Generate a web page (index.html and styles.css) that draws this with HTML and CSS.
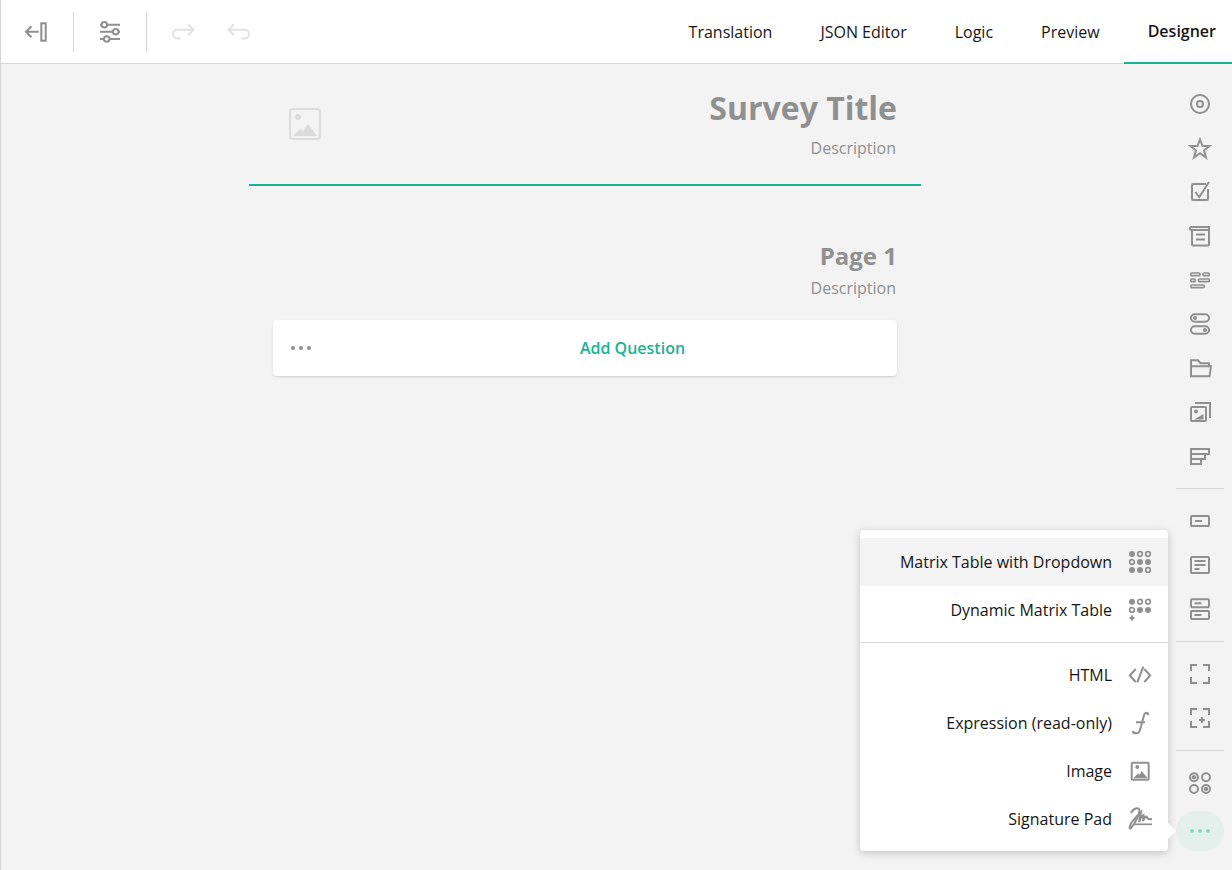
FILE: index.html
```html
<!DOCTYPE html>
<html lang="en">
<head>
<meta charset="utf-8">
<title>Survey Creator</title>
<link rel="stylesheet" href="styles.css">
</head>
<body>
<div class="app">
  <header class="topbar">
    <div class="actions">
      <button class="tool tool-first"><svg class="ico" viewBox="0 0 24 24"><path class="s" d="M13.700 11.700H1.500M6.500 6.200l-5.500 5.500 5.500 5.500"/><rect class="s" x="16.300" y="3.300" width="4.400" height="17.400"/></svg></button>
      <span class="vsep"></span>
      <button class="tool"><svg class="ico" viewBox="0 0 24 24"><path class="s" d="M10 4.700h12M2 11.700h12M21 11.700h1M2 19h3M12 19h10"/><path class="s" d="M2 4.700h1"/><circle class="s" cx="6.300" cy="4.700" r="2.800"/><circle class="s" cx="17.700" cy="11.700" r="2.800"/><circle class="s" cx="8.700" cy="19" r="2.800"/></svg></button>
      <span class="vsep"></span>
      <button class="tool"><svg class="ico" viewBox="0 0 24 24"><path class="s off" d="M22.500 9.700H7.500C3.500 9.700 2 12 2 14s1.500 4.500 5 4.500h2.500M17 4.200l5.500 5.500-5.500 5.500"/></svg></button>
      <button class="tool"><svg class="ico" viewBox="0 0 24 24"><path class="s off" d="M1.500 9.700h15C20.500 9.700 22 12 22 14s-1.500 4.500-5 4.500h-2.500M7 4.200L1.500 9.700 7 15.200"/></svg></button>
    </div>
    <nav class="tabs">
      <a class="tab">Translation</a>
      <a class="tab">JSON Editor</a>
      <a class="tab">Logic</a>
      <a class="tab">Preview</a>
      <a class="tab tab-active">Designer</a>
    </nav>
  </header>
  <main class="workspace">
    <section class="canvas">
      <div class="survey">
        <div class="survey-head">
          <svg class="logo" viewBox="0 0 32 32"><rect class="logo-frame" x="1" y="1" width="30" height="30" rx="3"/><circle class="logo-fill" cx="9" cy="9" r="3"/><path class="logo-fill" d="M4 28l7-7 3 2 5-7 9 12z"/></svg>
          <div class="survey-text">
            <h1 class="survey-title">Survey Title</h1>
            <p class="desc">Description</p>
          </div>
        </div>
        <div class="page">
          <h2 class="page-title">Page 1</h2>
          <p class="desc page-desc">Description</p>
          <div class="card">
            <div class="card-dots"><svg class="ico" viewBox="0 0 24 24"><circle class="f" cx="4" cy="12" r="2"/><circle class="f" cx="12" cy="12" r="2"/><circle class="f" cx="20" cy="12" r="2"/></svg></div>
            <button class="add">Add Question</button>
          </div>
        </div>
      </div>
    </section>
    <aside class="toolbox">
      <div class="tb"><svg class="ico" viewBox="0 0 24 24"><circle class="s" cx="12" cy="12" r="9"/><circle class="s" cx="12" cy="12" r="3"/></svg></div>
      <div class="tb"><svg class="ico" viewBox="0 0 24 24"><path class="s" d="M12 3.500l2.500 6.500h7l-5.500 4.500 2 7-6-4.200-6 4.200 2-7L2.500 10h7z"/></svg></div>
      <div class="tb"><svg class="ico" viewBox="0 0 24 24"><path class="s" d="M18 4H5a1 1 0 0 0-1 1v14a1 1 0 0 0 1 1h14a1 1 0 0 0 1-1V9"/><path class="s" d="M7.500 12l3.800 5L21 2"/></svg></div>
      <div class="tb"><svg class="ico" viewBox="0 0 24 24"><path class="s" d="M4 7V20a1.500 1.500 0 0 0 1.500 1.500h14A1.500 1.500 0 0 0 21 20V3H3.500A1.500 1.500 0 0 0 3.500 6H21M8 10.500h9M8 15.500h9"/></svg></div>
      <div class="tb"><svg class="ico" viewBox="0 0 24 24"><rect class="s tm" x="2.800" y="5" width="9.200" height="2.700" rx="1"/><rect class="s tm" x="15" y="5" width="6.200" height="2.700" rx="1"/><rect class="s tm" x="2.800" y="11" width="4.400" height="2.700" rx="1"/><rect class="s tm" x="10.500" y="11" width="10.700" height="2.700" rx="1"/><rect class="s tm" x="2.800" y="17" width="13.500" height="2.700" rx="1.300"/></svg></div>
      <div class="tb"><svg class="ico" viewBox="0 0 24 24"><rect class="s" x="3" y="2.300" width="18" height="7.400" rx="3.700"/><rect class="s" x="3" y="14.300" width="18" height="7.400" rx="3.700"/><circle class="f" cx="7" cy="6" r="2"/><circle class="f" cx="17" cy="18" r="2"/></svg></div>
      <div class="tb"><svg class="ico" viewBox="0 0 24 24"><path class="s" d="M3 20.300V4.300h7l2.500 3H21v3M3 10.300h20l-1.500 10H3z"/></svg></div>
      <div class="tb"><svg class="ico" viewBox="0 0 24 24"><rect class="s" x="3" y="7" width="15" height="14" rx="1"/><path class="s" d="M7 3h15v15"/><circle class="f" cx="8" cy="11.500" r="2"/><path class="f" d="M6 19.500l9.500-5.500v5.500z"/></svg></div>
      <div class="tb"><svg class="ico" viewBox="0 0 24 24"><path class="s" d="M3 5h18v5H3zM3 10h14v5H3zM3 15h10v5H3z"/></svg></div>
      <hr class="tb-sep">
      <div class="tb"><svg class="ico" viewBox="0 0 24 24"><rect class="s" x="3" y="7" width="18" height="10" rx="1"/><path class="s" d="M7 12h7"/></svg></div>
      <div class="tb"><svg class="ico" viewBox="0 0 24 24"><rect class="s" x="3" y="4" width="18" height="16" rx="1"/><path class="s" d="M6.500 8h11M6.500 12h11M6.500 16h5"/></svg></div>
      <div class="tb"><svg class="ico" viewBox="0 0 24 24"><rect class="s" x="3" y="2.300" width="18" height="8" rx="1"/><rect class="s" x="3" y="14" width="18" height="8" rx="1"/><path class="s" d="M6.500 6.300h7M6.500 18h7"/></svg></div>
      <hr class="tb-sep">
      <div class="tb"><svg class="ico" viewBox="0 0 24 24"><path class="s" d="M3 9V3h6M15 3h6v6M21 15v6h-6M9 21H3v-6"/></svg></div>
      <div class="tb"><svg class="ico" viewBox="0 0 24 24"><path class="s" d="M3 9V3h6M15 3h6v6M21 15v6h-6M9 21H3v-6M14 11v6M11 14h6"/></svg></div>
      <hr class="tb-sep">
      <div class="tb"><svg class="ico" viewBox="0 0 24 24"><circle class="s" cx="6" cy="6.300" r="4"/><circle class="s" cx="18" cy="6.300" r="4"/><circle class="s" cx="6" cy="18" r="4"/><circle class="s" cx="18" cy="18" r="4"/><circle class="f" cx="6" cy="6.300" r="2.200"/><circle class="f" cx="18" cy="18" r="2.200"/></svg></div>
      <div class="tb tb-more"><svg class="ico" viewBox="0 0 24 24"><circle class="mint" cx="4" cy="12" r="2"/><circle class="mint" cx="12" cy="12" r="2"/><circle class="mint" cx="20" cy="12" r="2"/></svg></div>
    </aside>
    <div class="menu">
      <div class="menu-item menu-item-hover"><span>Matrix Table with Dropdown</span><svg class="ico" viewBox="0 0 24 24"><circle class="f" cx="4" cy="4" r="3"/><circle class="s tm" cx="12" cy="4" r="2.300"/><circle class="s tm" cx="20" cy="4" r="2.300"/><circle class="s tm" cx="4" cy="12" r="2.300"/><circle class="f" cx="12" cy="12" r="3"/><circle class="f" cx="20" cy="12" r="3"/><circle class="f" cx="4" cy="20" r="3"/><circle class="f" cx="12" cy="20" r="3"/><circle class="s tm" cx="20" cy="20" r="2.300"/></svg></div>
      <div class="menu-item"><span>Dynamic Matrix Table</span><svg class="ico" viewBox="0 0 24 24"><circle class="f" cx="4" cy="3.700" r="3"/><circle class="s tm" cx="12" cy="3.700" r="2.300"/><circle class="s tm" cx="20" cy="3.700" r="2.300"/><circle class="s tm" cx="4" cy="12" r="2.300"/><circle class="f" cx="12" cy="12" r="3"/><circle class="f" cx="20" cy="12" r="3"/><path class="s" d="M4 17.500v5M1.500 20h5"/></svg></div>
      <hr class="menu-sep">
      <div class="menu-item"><span>HTML</span><svg class="ico" viewBox="0 0 24 24"><path class="s" d="M7.700 6L1.800 12.500l5.900 6.500M16.300 6l5.900 6.500-5.900 6.500M15.300 3.700l-6 15.600"/></svg></div>
      <div class="menu-item"><span>Expression (read-only)</span><svg class="ico" viewBox="0 0 24 24"><path class="s" d="M20 2.800C18 .8 16.500 2 15.800 5L12 19C11 22.500 9 23 5 21.500M8 11.300h9"/><circle class="f" cx="20" cy="3" r="1.300"/><circle class="f" cx="5.200" cy="21" r="1.300"/></svg></div>
      <div class="menu-item"><span>Image</span><svg class="ico" viewBox="0 0 24 24"><rect class="s" x="3.700" y="3.700" width="17" height="17" rx="1"/><circle class="f" cx="9.300" cy="7.900" r="2"/><path class="f" d="M5.300 19.300l4.700-4.800 1.800 1.300 1.700-4.100 6.200 7.600z"/></svg></div>
      <div class="menu-item"><span>Signature Pad</span><svg class="ico" viewBox="0 0 24 24"><path class="s tm" d="M6 17.300h18"/><path class="s" d="M3 6C5 2 9 0 11 2 13 5 7 17 3 21 1 23 1 19 4 15 7 11 10 8 13 5L11 15C13 11 14 8 15.500 8L15 14C16.500 11 17.500 9 18.500 9.500 19 11.500 21 12.500 24 12"/></svg></div>
    </div>
  </main>
</div>
</body>
</html>
```
FILE: styles.css
```css
* { box-sizing: border-box; }
html, body { margin: 0; height: 100%; }
body { font-family: "Open Sans", sans-serif; color: #161616; background: #f3f3f3; overflow: hidden; }
.app { display: flex; flex-direction: column; height: 870px; border-left: 1px solid #d6d6d6; }
.topbar { display: flex; justify-content: space-between; height: 64px; flex: none; background: #fff; border-bottom: 1px solid #d6d6d6; }
.actions { display: flex; align-items: center; padding-left: 12px; }
.tool { display: flex; align-items: center; justify-content: center; width: 48px; height: 40px; padding: 0; border: 0; background: none; }
.tool + .tool { width: 64px; }
.vsep { width: 1px; height: 40px; margin: 0 12px; background: #d6d6d6; }
.tabs { display: flex; }
.tab { display: flex; align-items: center; height: 64px; padding: 0 24px; font-size: 16px; }
.tab-active { padding-right: 16px; font-weight: 600; border-bottom: 2px solid #19b394; }
.ico { display: block; width: 24px; height: 24px; flex: none; overflow: visible; }
.s { fill: none; stroke: #909090; stroke-width: 2; }
.tm { stroke-width: 1.7; }
.f { fill: #909090; }
.off { stroke: #e2e2e2; }
.mint { fill: #7fdcc3; }
.workspace { position: relative; display: flex; flex: 1; min-height: 0; }
.canvas { flex: 1; display: flex; justify-content: center; }
.survey { width: 672px; }
.survey-head { display: flex; justify-content: space-between; height: 122px; padding: 20px 24px 0 40px; border-bottom: 2px solid #19b394; }
.logo { width: 32px; height: 32px; margin-top: 24px; }
.logo-frame { fill: none; stroke: #dcdcdc; stroke-width: 2; }
.logo-fill { fill: #dcdcdc; }
.survey-text { text-align: right; }
.survey-title { margin: 0; font-size: 32px; line-height: 48px; font-weight: 700; color: #909090; }
.desc { margin: 0 1px 0 0; font-size: 16px; line-height: 24px; color: #909090; }
.survey-text .desc { margin-top: 4px; }
.page { padding: 50px 24px 0; text-align: right; }
.page-title { margin: 0; font-size: 24px; line-height: 40px; font-weight: 700; color: #909090; }
.card { display: flex; align-items: center; height: 56px; margin-top: 20px; background: #fff; border-radius: 4px; box-shadow: 0 1px 2px rgba(0,0,0,.15); }
.card-dots { width: 95px; padding-left: 16px; }
.add { flex: 1; height: 100%; padding: 0; border: 0; background: none; font: 600 16px "Open Sans", sans-serif; color: #19b394; }
.toolbox { flex: none; width: 63px; padding: 18px 8px 0 7px; }
.tb { display: flex; align-items: center; justify-content: center; height: 44px; }
.tb-sep { height: 1px; margin: 10px 0; border: 0; background: #d6d6d6; }
.tb-more { height: 40px; margin-top: 6px; border-radius: 20px; background: #e3f0ec; }
.menu { position: absolute; top: 466px; left: 859px; width: 308px; padding: 8px 0; background: #fff; border-radius: 4px; box-shadow: 0 2px 8px rgba(0,0,0,.2); }
.menu::after { content: ""; position: absolute; right: -8px; bottom: 12px; border-left: 8px solid #fff; border-top: 8px solid transparent; border-bottom: 8px solid transparent; }
.menu-item { display: flex; align-items: center; justify-content: flex-end; gap: 16px; height: 48px; padding-right: 16px; font-size: 16px; }
.menu-item-hover { background: #f3f3f3; }
.menu-sep { height: 1px; margin: 8px 0; border: 0; background: #d6d6d6; }
```
